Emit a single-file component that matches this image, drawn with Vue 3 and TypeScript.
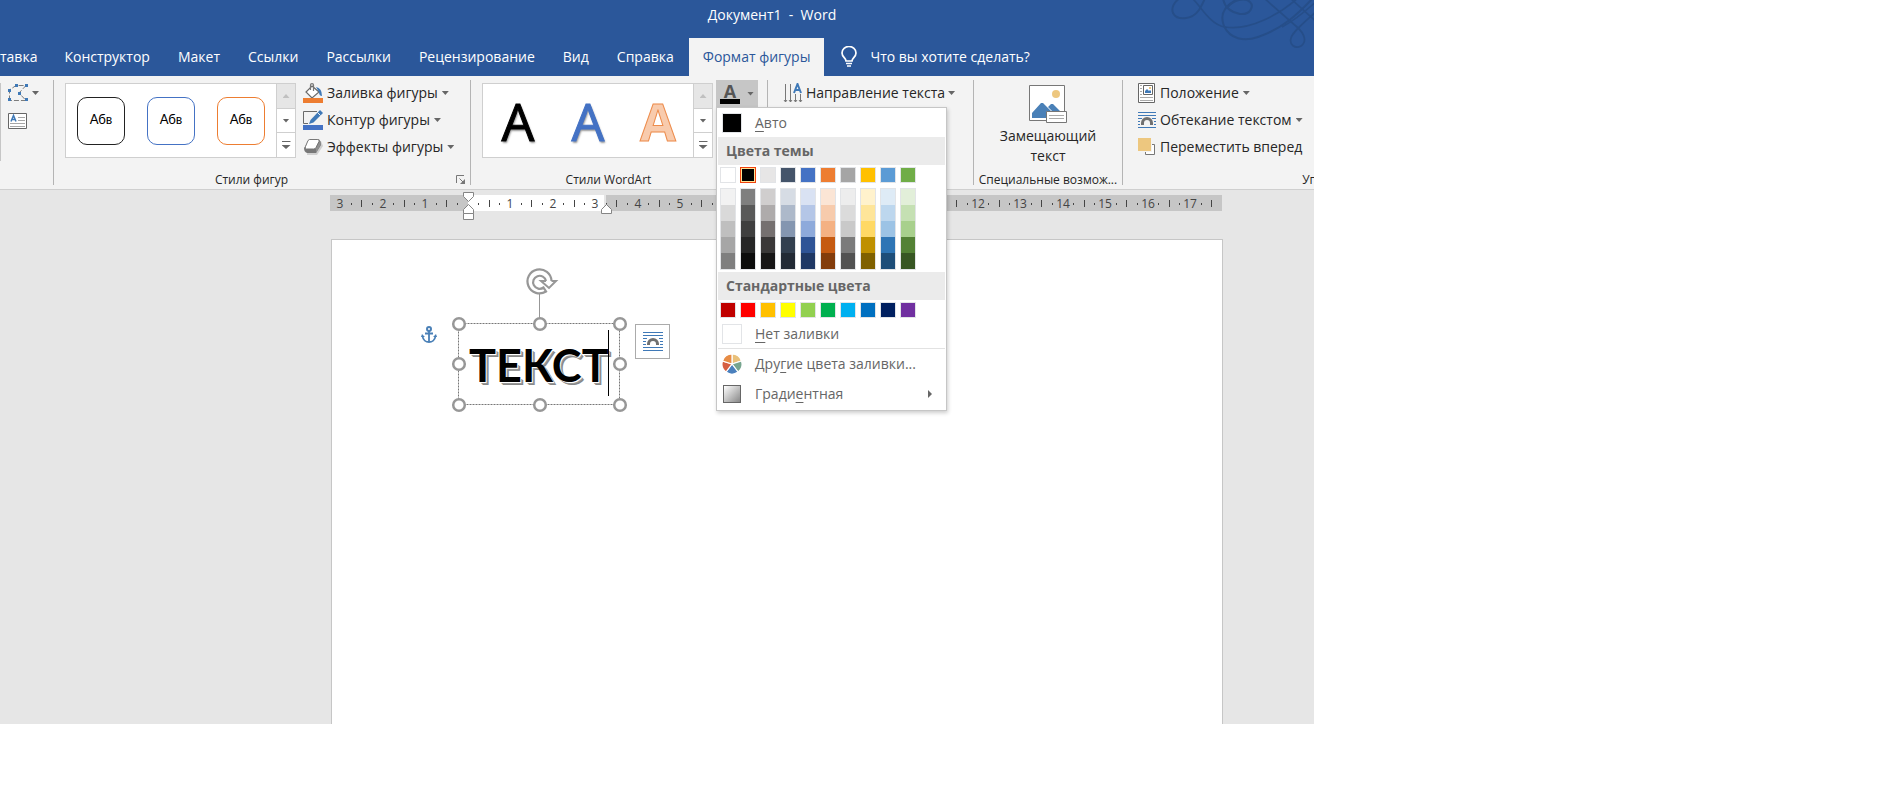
<script setup lang="ts">
import { ref } from 'vue'

interface Tab { label: string; active?: boolean }

const tabs: Tab[] = [
  { label: 'тавка' },
  { label: 'Конструктор' },
  { label: 'Макет' },
  { label: 'Ссылки' },
  { label: 'Рассылки' },
  { label: 'Рецензирование' },
  { label: 'Вид' },
  { label: 'Справка' },
  { label: 'Формат фигуры', active: true },
]

const shapeStyles = ['dark', 'blue', 'orange']
const artStyles = ['dark', 'blue', 'orange']
const query = ref('')
const artText = ref('ТЕКСТ')

const themeColors = ['#ffffff', '#000000', '#e7e6e6', '#44546a', '#4472c4', '#ed7d31', '#a5a5a5', '#ffc000', '#5b9bd5', '#70ad47']
const themeTints = [
  ['#f2f2f2', '#d9d9d9', '#bfbfbf', '#a6a6a6', '#7f7f7f'],
  ['#7f7f7f', '#595959', '#3f3f3f', '#262626', '#0c0c0c'],
  ['#d0cece', '#aeabab', '#757070', '#3a3838', '#171616'],
  ['#d6dce4', '#adb9ca', '#8496b0', '#323f4f', '#222a35'],
  ['#d9e2f3', '#b4c6e7', '#8eaadb', '#2f5496', '#1f3864'],
  ['#fbe5d5', '#f7cbac', '#f4b183', '#c55a11', '#833c0b'],
  ['#ededed', '#dbdbdb', '#c9c9c9', '#7b7b7b', '#525252'],
  ['#fff2cc', '#fee599', '#ffd965', '#bf9000', '#7f6000'],
  ['#deebf6', '#bdd7ee', '#9cc3e5', '#2e75b5', '#1e4e79'],
  ['#e2efd9', '#c5e0b3', '#a8d08d', '#538135', '#375623'],
]
const standardColors = ['#c00000', '#ff0000', '#ffc000', '#ffff00', '#92d050', '#00b050', '#00b0f0', '#0070c0', '#002060', '#7030a0']

const zero = 138
const step = 85 / 2
const numbers: { x: number; n: number }[] = []
const halves: number[] = []
const dots: number[] = []
for (let i = -3; i <= 17; i++) {
  const x = zero + i * step
  if (i !== 0) numbers.push({ x: Math.floor(x), n: Math.abs(i) })
  halves.push(Math.floor(x + step / 2))
  dots.push(Math.floor(x + step / 4))
  dots.push(Math.floor(x + (step * 3) / 4))
}
</script>

<template>
  <div class="app">
    <header class="top">
      <svg class="swirl" width="164" height="60" viewBox="0 0 164 60" fill="none" stroke="#264e89" aria-hidden="true">
        <path d="M30 -2C24 2 21 8 23 13C27 21 42 20 49 10C52 5 54 1 55 -2" stroke-width="2" />
        <path d="M42 -2C50 5 60 25 75 27C100 31 130 14 148 -2" stroke-width="1.6" />
        <path d="M90 -2C72 6 70 16 74 26C80 39 94 42 108 37C132 29 148 14 163 -2" stroke-width="2" />
        <path d="M73 -2C74 6 80 12 90 14C101 15 104 6 100 2C95 -3 83 0 78 7" stroke-width="2" />
        <path d="M114 -2L147 27C155 34 157 42 151 46C145 49 139 45 141 38C143 31 155 22 170 8" stroke-width="1.7" />
        <path d="M140 -2L170 25M170 -2C155 12 145 20 132 27" stroke-width="1.6" />
      </svg>
      <div class="title">Документ1&nbsp; -&nbsp; Word</div>
      <nav class="tabs">
        <button v-for="t in tabs" :key="t.label" type="button" class="tab" :class="{ active: t.active }">{{ t.label }}</button>
        <label class="tell">
          <svg width="16" height="22" viewBox="0 0 16 22" fill="none" stroke="#fff" stroke-width="1.7" aria-hidden="true">
            <path d="M5 15C5 12 1 11 1 7A7 6.5 0 0 1 15 7C15 11 11 12 11 15Z" />
            <path d="M5 17.5H11M6 20H10" />
          </svg>
          <input v-model="query" type="text" placeholder="Что вы хотите сделать?" aria-label="Что вы хотите сделать?" />
        </label>
      </nav>
    </header>

    <section class="ribbon">
      <div class="group edit">
        <button type="button" class="cmd" aria-label="Изменить фигуру">
          <svg width="20" height="18" viewBox="0 0 20 18" aria-hidden="true">
            <path d="M1.500 16.500V6L8 1.500H18L11 9L18 16.500Z" fill="none" stroke="#7c7c7c" stroke-dasharray="5 2" />
            <path d="M0 5h3v3H0zM7 0h3v3H7zM17 0h3v3h-3zM10 8h3v3h-3zM0 14h3v3H0zM17 14h3v3h-3z" fill="#3f79b7" />
          </svg>
          <i class="caret"></i>
        </button>
        <button type="button" class="cmd" aria-label="Надпись">
          <svg width="20" height="18" viewBox="0 0 20 18" aria-hidden="true">
            <path d="M.5 1.500H18.500V16.500H.5Z" fill="#fff" stroke="#666" />
            <path d="M10 5.500H17M10 8.500H17M2 11.500H17M2 14.500H17" stroke="#a6a6a6" />
            <path d="M3 9.500L5.500 3.500L8 9.500M4 7.500H7" fill="none" stroke="#3f79b7" stroke-width="1.500" />
          </svg>
        </button>
      </div>

      <div class="group shapes">
        <div class="body">
          <div class="gallery">
            <button v-for="s in shapeStyles" :key="s" type="button" class="pick"><span class="shape" :class="s">Абв</span></button>
            <div class="scroll">
              <button type="button" class="off" aria-label="Вверх"><i class="caret up"></i></button>
              <button type="button" aria-label="Вниз"><i class="caret"></i></button>
              <button type="button" aria-label="Ещё"><i class="more"></i></button>
            </div>
          </div>
          <div class="stack">
            <button type="button" class="cmd">
              <svg width="20" height="20" viewBox="0 0 20 20" aria-hidden="true">
                <path d="M9 3L16 9L9 15L3 9Z" fill="#fff" stroke="#6a6a6a" stroke-width="1.200" />
                <path d="M7.500 7V2Q7.500.6 9 .6T10.500 2V8" fill="none" stroke="#777" stroke-width="1.200" />
                <path d="M13 4Q19 5 19 13Q16 13 16 9Z" fill="#3f79b7" />
                <path d="M0 15H20V20H0Z" fill="#ed7d31" />
              </svg>
              Заливка фигуры<i class="caret"></i>
            </button>
            <button type="button" class="cmd">
              <svg width="20" height="20" viewBox="0 0 20 20" aria-hidden="true">
                <path d="M14 1.500H.5V13.500H5" fill="none" stroke="#6a6a6a" />
                <path d="M6 14L7.500 10L17 0L20 3L10.500 12.500Z" fill="#3f79b7" />
                <path d="M14.500 2.500L17.500 5.500" stroke="#f3f3f3" />
                <path d="M0 15H20V20H0Z" fill="#4472c4" />
              </svg>
              Контур фигуры<i class="caret"></i>
            </button>
            <button type="button" class="cmd">
              <svg width="20" height="20" viewBox="0 0 20 20" aria-hidden="true">
                <path d="M5 4L18 4L20 9L14 18H4Z" fill="#cfcfcf" />
                <path d="M7 2H15Q18 3 18 8L13 16H4Q1 15 1 11Z" fill="#777" />
                <path d="M13 11L17 4Q18 6 17.500 8L13 16Z" fill="#8f8f8f" />
                <path d="M6.500 2.500H14.500Q17 2.500 16 4.500L13 10.500Q12 12 10.500 12H3.500Q1.500 12 2.500 9.500L5 3.500Z" fill="#fff" stroke="#777" />
              </svg>
              Эффекты фигуры<i class="caret"></i>
            </button>
          </div>
        </div>
        <footer class="caption">Стили фигур
          <button type="button" class="launcher" aria-label="Формат фигуры">
            <svg width="10" height="10" viewBox="0 0 10 10" fill="none" stroke="#777" aria-hidden="true"><path d="M.5 8V.5H8M3.500 3.500L8 8" /><path d="M9 4V9H4Z" fill="#777" stroke="none" /></svg>
          </button>
        </footer>
      </div>

      <div class="group art">
        <div class="body">
          <div class="gallery">
            <button v-for="s in artStyles" :key="s" type="button" class="pick"><span class="letter" :class="s">A</span></button>
            <div class="scroll">
              <button type="button" class="off" aria-label="Вверх"><i class="caret up"></i></button>
              <button type="button" aria-label="Вниз"><i class="caret"></i></button>
              <button type="button" aria-label="Ещё"><i class="more"></i></button>
            </div>
          </div>
          <div class="fill">
            <button type="button" class="fillbtn" aria-label="Заливка текста" aria-expanded="true">
              <span class="fillicon">A</span><i class="caret"></i>
            </button>
            <div class="menu">
              <button type="button" class="row"><span class="chip black"></span><span><u>А</u>вто</span></button>
              <h3>Цвета темы</h3>
              <div class="swatches">
                <button v-for="(c, i) in themeColors" :key="c" type="button" class="sw" :class="{ selected: i === 1 }" :style="{ backgroundColor: c }" :aria-label="c"></button>
              </div>
              <div class="swatches tints">
                <div v-for="(col, i) in themeTints" :key="i" class="column">
                  <button v-for="c in col" :key="c" type="button" :style="{ backgroundColor: c }" :aria-label="c"></button>
                </div>
              </div>
              <h3>Стандартные цвета</h3>
              <div class="swatches">
                <button v-for="c in standardColors" :key="c" type="button" class="sw" :style="{ backgroundColor: c }" :aria-label="c"></button>
              </div>
              <button type="button" class="row"><span class="chip"></span><span><u>Н</u>ет заливки</span></button>
              <hr />
              <button type="button" class="row tall">
                <svg width="20" height="20" viewBox="-10 -10 20 20" stroke="#fff" stroke-width="1.200" aria-hidden="true">
                  <path d="M0 0V-10A10 10 0 0 1 9.500 -3Z" fill="#e9c07a" />
                  <path d="M0 0L9.500 -3A10 10 0 0 1 6 8Z" fill="#77a58f" />
                  <path d="M0 0L6 8A10 10 0 0 1 -6 8Z" fill="#4a80bd" />
                  <path d="M0 0L-6 8A10 10 0 0 1 -9.500 -3Z" fill="#d65f41" />
                  <path d="M0 0L-9.500 -3A10 10 0 0 1 0 -10Z" fill="#e78c45" />
                </svg>
                <span>Дру<u>г</u>ие цвета заливки...</span>
              </button>
              <button type="button" class="row tall"><span class="chip gradient"></span><span>Гради<u>е</u>нтная</span><i class="arrow"></i></button>
            </div>
          </div>
        </div>
        <footer class="caption">Стили WordArt</footer>
      </div>

      <div class="group direction">
        <div class="stack">
          <button type="button" class="cmd">
            <svg width="20" height="20" viewBox="0 0 20 20" fill="none" aria-hidden="true">
              <path d="M2.500 1V19M7.500 1V19M12.500 11V19M17.500 11V19M1 17L2.500 19L4 17M6 17L7.500 19L9 17M11 17L12.500 19L14 17M16 17L17.500 19L19 17" stroke="#777" />
              <path d="M11 10L14.500 1L18 10M12 7H17" stroke="#3f79b7" stroke-width="2" />
            </svg>
            Направление текста<i class="caret"></i>
          </button>
        </div>
      </div>

      <div class="group alt">
        <button type="button" class="big">
          <svg width="38" height="38" viewBox="0 0 38 38" aria-hidden="true">
            <path d="M.5 .5H35.500V35.500H.5Z" fill="#fff" stroke="#777" />
            <circle cx="27" cy="9" r="4" fill="#edc77f" />
            <path d="M3 33V28L12 18H14L24 28V33ZM19 22L22 19H24L31 26H23Z" fill="#4a80b7" />
            <path d="M17.500 26.500H37.500V37.500H17.500Z" fill="#fff" stroke="#777" />
            <path d="M20 30.500H35M20 33.500H35" stroke="#aaa" />
          </svg>
          <span>Замещающий<br />текст</span>
        </button>
        <footer class="caption">Специальные возмож...</footer>
      </div>

      <div class="group arrange">
        <div class="stack">
          <button type="button" class="cmd">
            <svg width="18" height="20" viewBox="0 0 18 20" aria-hidden="true">
              <path d="M.5 .5H16.500V19.500H.5Z" fill="#fff" stroke="#666" />
              <path d="M2 2.500H4M2 5.500H4M2 8.500H4M2 11.500H4M2 14.500H15M2 17.500H15" stroke="#aaa" />
              <path d="M5.500 2.500H14.500V11.500H5.500Z" fill="#fff" stroke="#666" />
              <path d="M7 10V8L9 6L11 8L12 7L13 8V10Z" fill="#3f79b7" /><path d="M11 4h2v2h-2z" fill="#edc77f" />
            </svg>
            Положение<i class="caret"></i>
          </button>
          <button type="button" class="cmd">
            <svg width="18" height="20" viewBox="0 0 18 20" aria-hidden="true">
              <path d="M0 2.500H18M0 5.500H18M0 8.500H4M14 8.500H18M0 11.500H2M16 11.500H18M0 14.500H2M16 14.500H18M0 17.500H18" stroke="#3f79b7" />
              <path d="M4.500 15V13A4.500 4.500 0 0 1 13.500 13V15" fill="none" stroke="#707070" stroke-width="3" />
            </svg>
            Обтекание текстом<i class="caret"></i>
          </button>
          <button type="button" class="cmd">
            <svg width="18" height="20" viewBox="0 0 18 20" aria-hidden="true">
              <path d="M7.500 7.500H16.500V17.500H7.500Z" fill="#fff" stroke="#777" />
              <path d="M0 0H14V15H0Z" fill="#f3f3f3" /><path d="M0 1H13V14H0Z" fill="#edc77f" />
            </svg>
            Переместить вперед
          </button>
        </div>
        <footer class="caption">Уп</footer>
      </div>
    </section>

    <main class="work">
      <svg class="ruler" width="892" height="32" viewBox="0 0 892 32" aria-hidden="true">
        <path d="M0 5H892V21H0Z" fill="#c6c6c6" />
        <path d="M138 5H274V21H138Z" fill="#fff" />
        <path d="M274 5H276V21H274Z" fill="#e6e6e6" />
        <path v-for="x in halves" :key="'h' + x" :d="`M${x}.5 10V17`" stroke="#444" />
        <path v-for="x in dots" :key="'d' + x" :d="`M${x}.5 13V15`" stroke="#444" />
        <text v-for="m in numbers" :key="m.x" :x="m.x" y="18" text-anchor="middle">{{ m.n }}</text>
        <g fill="#fff" stroke="#858585">
          <path d="M133.500 2.500H143.500V6.500L138.500 11.500L133.500 6.500Z" />
          <path d="M138.500 14.500L143.500 19.500V23.500H133.500V19.500Z" />
          <path d="M133.500 23.500H143.500V29.500H133.500Z" />
          <path d="M276.500 14.500L281.500 19.500V23.500H271.500V19.500Z" />
        </g>
      </svg>
      <div class="page">
        <svg class="anchor" width="16" height="18" viewBox="0 0 16 18" fill="none" stroke="#4a80b7" stroke-width="2" aria-hidden="true">
          <circle cx="8" cy="3" r="2" /><path d="M8 5V16M1.500 10C2 14 5 16 8 16S14 14 14.500 10M4 7.500H12" stroke-width="1.800" /><path d="M0 11L1 8L4 11ZM16 11L15 8L12 11Z" fill="#4a80b7" stroke="none" />
        </svg>
        <div class="art-box">
          <span class="art-text">{{ artText }}</span><i class="cursor"></i>
          <svg class="frame" width="180" height="150" viewBox="0 0 180 150" fill="none" stroke="#979797" aria-hidden="true">
            <path d="M9.500 59.500H170.500V140.500H9.500Z" stroke="#777" stroke-dasharray="2 1" />
            <path d="M90.500 30V54" />
            <g fill="#fff" stroke-width="2.500">
              <circle v-for="p in [[10, 60], [91, 60], [171, 60], [10, 100], [171, 100], [10, 141], [91, 141], [171, 141]]" :key="p.join()" :cx="p[0]" :cy="p[1]" r="5.800" />
            </g>
            <path d="M102.500 17A12 12 0 1 0 97 27.500L94.500 23.500A6.500 6.500 0 1 1 97 17" stroke-width="2.200" />
            <path d="M102.500 17H107L100 24L92 17H97" stroke-width="2" />
          </svg>
        </div>
        <button type="button" class="wrap" aria-label="Параметры разметки">
          <svg width="20" height="20" viewBox="0 0 20 20" aria-hidden="true">
            <path d="M0 .5H20M0 3.500H20M0 6.500H4M16 6.500H20M0 9.500H3M17 9.500H20M0 12.500H3M17 12.500H20M0 15.500H20M0 18.500H20" stroke="#3f79b7" />
            <path d="M5.500 13V12A4.500 4.500 0 0 1 14.500 12V13" fill="none" stroke="#707070" stroke-width="3" />
          </svg>
        </button>
      </div>
    </main>
  </div>
</template>

<style>
body { margin: 0; background: #fff; }
</style>

<style scoped>
.app, .app * { box-sizing: border-box; }
.app {
  width: calc(100% - 580px);
  min-height: calc(100vh - 80px);
  display: flex;
  flex-direction: column;
  overflow: hidden;
  font: 14px/20px "Open Sans", "Noto Sans", sans-serif;
  color: #262626;
  background: #e6e6e6;
}
button { margin: 0; padding: 0; border: 0; background: none; font: inherit; color: inherit; }
svg { display: block; flex: none; }
.top { position: relative; background: #2b579a; color: #fff; height: 76px; }
.swirl { position: absolute; right: 0; top: 0; }
.title { position: relative; height: 38px; padding: 5px 0 0 230px; text-align: center; }
.tabs { position: relative; display: flex; height: 38px; }
.tab { padding: 0 14px; white-space: nowrap; }
.tab:first-child { padding: 0 13px 0 0; }
.tab.active { background: #f3f3f3; color: #2b579a; margin-left: 1px; }
.tell { display: flex; align-items: center; gap: 13px; padding-left: 17px; flex: 1; }
.tell input { flex: 1; padding: 0; border: 0; outline: 0; background: none; font: inherit; color: #fff; }
.tell input::placeholder { color: #fff; opacity: 1; }

.ribbon { display: flex; height: 114px; padding-top: 4px; background: #f3f3f3; border-bottom: 1px solid #cfcfcf; }
.group { position: relative; display: flex; flex-direction: column; flex: none; height: 105px; padding-top: 3px; border-right: 1px solid #b4b4b4; }
.edit { width: 54px; padding-left: 8px; gap: 8px; }
.edit::before { content: ""; position: absolute; left: 0; top: 3px; height: 78px; border-left: 1px solid #c6c6c6; }
.edit .cmd { height: 20px; }
.shapes { width: 417px; padding-left: 11px; }
.art { width: 297px; padding-left: 11px; }
.direction { width: 206px; padding-left: 15px; }
.alt { width: 149px; }
.arrange { flex: 1 0 0; min-width: 0; padding-left: 15px; border-right: 0; }
.body { display: flex; }
.gallery { display: flex; flex: none; width: 231px; height: 75px; border: 1px solid #cfcfcf; background: #fff; }
.pick { width: 70px; display: grid; place-items: center; }
.scroll { width: 19px; margin-left: auto; display: grid; grid-template-rows: 25px 24px 1fr; border-left: 1px solid #cfcfcf; }
.scroll button { display: grid; place-items: center; border-bottom: 1px solid #cfcfcf; }
.scroll button:last-child { border-bottom: 0; }
.scroll .off { background: #e6e6e6; }
.caret { display: block; width: 7px; height: 4px; flex: none; background: #666; clip-path: polygon(0 0, 100% 0, 50% 100%); }
.caret.up { background: #c0c0c0; clip-path: polygon(50% 0, 100% 100%, 0 100%); }
.more { width: 9px; height: 8px; background: #666; clip-path: polygon(0 0, 100% 0, 100% 12%, 0 12%, 0 50%, 100% 50%, 50% 100%, 0 50%); }
.shape { width: 48px; height: 48px; border: 1px solid; border-radius: 10px; display: grid; place-items: center; font: 13px/16px Lato, sans-serif; padding-bottom: 3px; color: #000; }
.shape.dark { border-color: #222; }
.shape.blue { border-color: #4472c4; }
.shape.orange { border-color: #ed7d31; }
.letter { font: 52px/56px "Open Sans", sans-serif; text-shadow: 1px 2px 2px #999; }
.letter.dark { color: #000; -webkit-text-stroke: 1px #000; }
.letter.blue { color: #4472c4; -webkit-text-stroke: 1px #4472c4; }
.letter.orange { color: #f8cbad; font-weight: 700; text-shadow: none; -webkit-text-stroke: 1px #ed8c4c; }
.stack { display: flex; flex-direction: column; gap: 7px; }
.shapes .stack { padding-left: 7px; }
.cmd { display: flex; align-items: center; gap: 4px; height: 20px; white-space: nowrap; }
.caption { position: relative; margin: auto 0 -1px; height: 12px; text-align: center; font-size: 12px; line-height: 12px; white-space: nowrap; }
.shapes .caption, .art .caption { padding-right: 32px; }
.launcher { position: absolute; right: 4px; top: 1px; }
.direction .cmd { gap: 3px; }
.big { display: flex; flex-direction: column; align-items: center; gap: 3px; padding-top: 2px; }
.arrange .caption { text-align: right; margin-right: -3px; }

.fill { position: relative; margin: -3px 0 0 3px; }
.fillbtn { display: flex; align-items: center; gap: 7px; width: 42px; height: 27px; padding-left: 4px; background: #c6c6c6; }
.fillicon { width: 20px; height: 20px; border-bottom: 5px solid #000; font: 700 18px/15px "Open Sans", sans-serif; color: #555; }
.menu { position: absolute; z-index: 5; left: 0; top: 27px; width: 231px; padding: 1px; border: 1px solid #c6c6c6; background: #fff; box-shadow: 1px 2px 4px #0003; color: #666; }
.menu .row { display: flex; align-items: center; gap: 13px; width: 100%; height: 28px; padding-left: 4px; text-align: left; }
.menu .tall { height: 30px; }
.menu .row u { text-underline-offset: 3px; text-decoration-thickness: 1px; }
.menu h3 { margin: 0; padding-left: 8px; height: 28px; font-size: 14px; line-height: 28px; background: #ebebeb; }
.chip { width: 20px; height: 20px; border: 1px solid #e2e4e7; background: #fff; }
.chip.black { background: #000; }
.chip.gradient { border-color: #666; background: linear-gradient(135deg, #fff, #888); width: 18px; height: 18px; margin: 0 1px; }
.swatches { display: flex; gap: 4px; padding: 2px; }
.sw { width: 16px; height: 16px; border: 1px solid #e2e4e7; }
.sw.selected { border-color: #f0420e; box-shadow: inset 0 0 0 1px #ffe294; }
.tints { padding: 3px 2px 2px; }
.column { display: grid; grid-template-rows: repeat(5, 1fr); width: 16px; height: 82px; border: 1px solid #e2e4e7; }
.menu hr { margin: 0; border: 0; border-top: 1px solid #e2e2e2; }
.arrow { margin-left: auto; margin-right: 13px; width: 4px; height: 8px; background: #666; clip-path: polygon(0 0, 100% 50%, 0 100%); }

.work { flex: 1; display: flex; flex-direction: column; padding-left: 330px; }
.ruler text { font: 12px "Open Sans", sans-serif; fill: #444; }
.page { position: relative; flex: 1; width: 892px; margin: 17px 0 0 1px; background: #fff; border: 1px solid #c6c6c6; border-bottom: 0; }
.anchor { position: absolute; left: 89px; top: 86px; }
.art-box { position: absolute; left: 126px; top: 84px; width: 162px; height: 82px; display: flex; align-items: center; padding-left: 11px; }
.art-text { font: 700 45px/56px Lato, sans-serif; color: #000; text-shadow: 1px 1px #fff, 2px 2px #999, 3px 3px #888; }
.cursor { position: absolute; left: 150px; top: 6px; height: 66px; border-left: 1px solid #000; }
.frame { position: absolute; left: -9px; top: -60px; }
.wrap { position: absolute; left: 303px; top: 84px; width: 35px; height: 35px; display: grid; place-items: center; background: #fff; border: 1px solid #ababab; }
</style>
